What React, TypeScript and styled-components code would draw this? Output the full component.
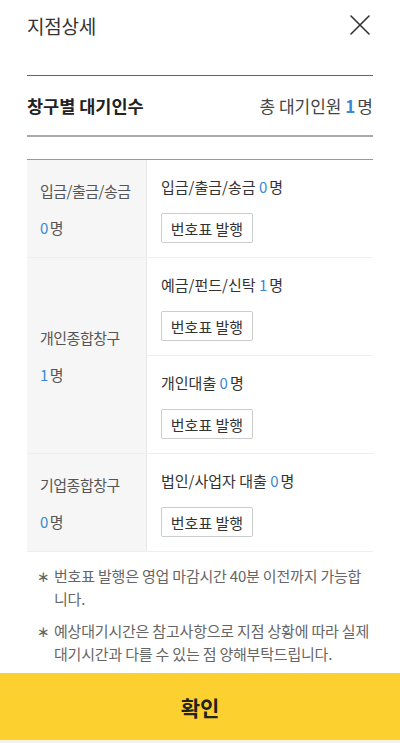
import styled, { createGlobalStyle } from "styled-components";

const GlobalStyle = createGlobalStyle`
  html, body {
    margin: 0;
    padding: 0;
    background: #fff;
  }
  body {
    font-family: "Noto Sans CJK KR", "Noto Sans", sans-serif;
    color: #333;
  }
`;

type Counter = {
  name: string;
  count: number;
};

type Window = {
  name: string;
  count: number;
  counters: Counter[];
};

const windows: Window[] = [
  {
    name: "입금/출금/송금",
    count: 0,
    counters: [{ name: "입금/출금/송금", count: 0 }],
  },
  {
    name: "개인종합창구",
    count: 1,
    counters: [
      { name: "예금/펀드/신탁", count: 1 },
      { name: "개인대출", count: 0 },
    ],
  },
  {
    name: "기업종합창구",
    count: 0,
    counters: [{ name: "법인/사업자 대출", count: 0 }],
  },
];

const notes = [
  "번호표 발행은 영업 마감시간 40분 이전까지 가능합니다.",
  "예상대기시간은 참고사항으로 지점 상황에 따라 실제 대기시간과 다를 수 있는 점 양해부탁드립니다.",
];

const CloseIcon = () => (
  <svg width="22" height="22" viewBox="0 0 22 22">
    <path
      d="M2 2 L20 20 M20 2 L2 20"
      stroke="#333"
      strokeWidth="1.6"
      strokeLinecap="round"
    />
  </svg>
);

export default function App() {
  return (
    <>
      <GlobalStyle />
      <Page>
        <Header>
          <Title>지점상세</Title>
          <CloseButton aria-label="닫기">
            <CloseIcon />
          </CloseButton>
        </Header>
        <Summary>
          <SummaryTitle>창구별 대기인수</SummaryTitle>
          <SummaryTotal>
            총 대기인원 <Num bold>1</Num>명
          </SummaryTotal>
        </Summary>
        <Table>
          {windows.map((w) => (
            <Row key={w.name}>
              <LeftCell>
                <LeftName>{w.name}</LeftName>
                <LeftCount>
                  <Num>{w.count}</Num>명
                </LeftCount>
              </LeftCell>
              <RightCell>
                {w.counters.map((c) => (
                  <Counter key={c.name}>
                    <CounterName>
                      {c.name} <Num>{c.count}</Num>명
                    </CounterName>
                    <TicketButton>번호표 발행</TicketButton>
                  </Counter>
                ))}
              </RightCell>
            </Row>
          ))}
        </Table>
        <Notes>
          {notes.map((n) => (
            <Note key={n}>
              <Star>∗</Star>
              <NoteText>{n}</NoteText>
            </Note>
          ))}
        </Notes>
        <Footer>
          <ConfirmButton>확인</ConfirmButton>
        </Footer>
      </Page>
    </>
  );
}

const Page = styled.div`
  width: 400px;
  height: 743px;
  display: flex;
  flex-direction: column;
  overflow: hidden;
  background: #fff;
`;

const Header = styled.div`
  height: 50px;
  display: flex;
  align-items: center;
  justify-content: space-between;
  padding: 0 29px 0 27px;
  margin-bottom: 25px;
`;

const Title = styled.h1`
  margin: 0;
  font-size: 19px;
  font-weight: 400;
  color: #333;
  letter-spacing: -0.2px;
`;

const CloseButton = styled.button`
  border: none;
  background: none;
  padding: 0;
  width: 22px;
  height: 22px;
  display: flex;
`;

const Summary = styled.div`
  margin: 0 27px;
  height: 59px;
  border-top: 1px solid #666;
  border-bottom: 2px solid #aaa;
  display: flex;
  align-items: center;
  justify-content: space-between;
`;

const SummaryTitle = styled.h2`
  margin: 0;
  font-size: 17.5px;
  font-weight: 700;
  color: #222;
`;

const SummaryTotal = styled.div`
  font-size: 17px;
  color: #444;
`;

const Num = styled.span<{ bold?: boolean }>`
  color: #3b88d4;
  font-weight: ${(p) => (p.bold ? 700 : 400)};
  margin-right: 2px;
`;

const Table = styled.div`
  margin: 22px 27px 0;
  border-top: 1px solid #999;
`;

const Row = styled.div`
  display: grid;
  grid-template-columns: 120px 1fr;
  border-bottom: 1px solid #eee;
`;

const LeftCell = styled.div`
  background: #f6f6f6;
  border-right: 1px solid #e6e6e6;
  padding-left: 13px;
  display: flex;
  flex-direction: column;
  justify-content: center;
  gap: 16px;
  font-size: 15px;
  color: #555;
  letter-spacing: -0.5px;
`;

const LeftName = styled.div`
  line-height: 21px;
`;

const LeftCount = styled.div`
  line-height: 21px;
`;

const RightCell = styled.div`
  display: flex;
  flex-direction: column;
`;

const Counter = styled.div`
  padding: 17px 0 14px 14px;
  display: flex;
  flex-direction: column;
  align-items: flex-start;
  gap: 16px;
  & + & {
    border-top: 1px solid #eee;
  }
`;

const CounterName = styled.div`
  font-size: 15px;
  line-height: 20px;
  color: #333;
`;

const TicketButton = styled.button`
  width: 92px;
  height: 30px;
  padding: 0;
  background: #fff;
  border: 1px solid #ccc;
  border-radius: 2px;
  font-family: inherit;
  font-size: 15px;
  color: #333;
`;

const Notes = styled.div`
  padding: 12px 26px 0 37px;
  display: flex;
  flex-direction: column;
  gap: 9px;
  flex: 1;
`;

const Note = styled.div`
  display: flex;
  font-size: 15px;
  line-height: 23px;
  color: #666;
`;

const Star = styled.span`
  width: 17px;
  flex-shrink: 0;
  color: #666;
`;

const NoteText = styled.p`
  margin: 0;
  word-break: break-all;
  letter-spacing: -0.2px;
`;

const Footer = styled.div`
  height: 70px;
  background: #f6f2e6;
`;

const ConfirmButton = styled.button`
  width: 100%;
  height: 67px;
  border: none;
  background: #fcd02e;
  font-family: inherit;
  font-size: 21px;
  font-weight: 700;
  color: #222;
`;
